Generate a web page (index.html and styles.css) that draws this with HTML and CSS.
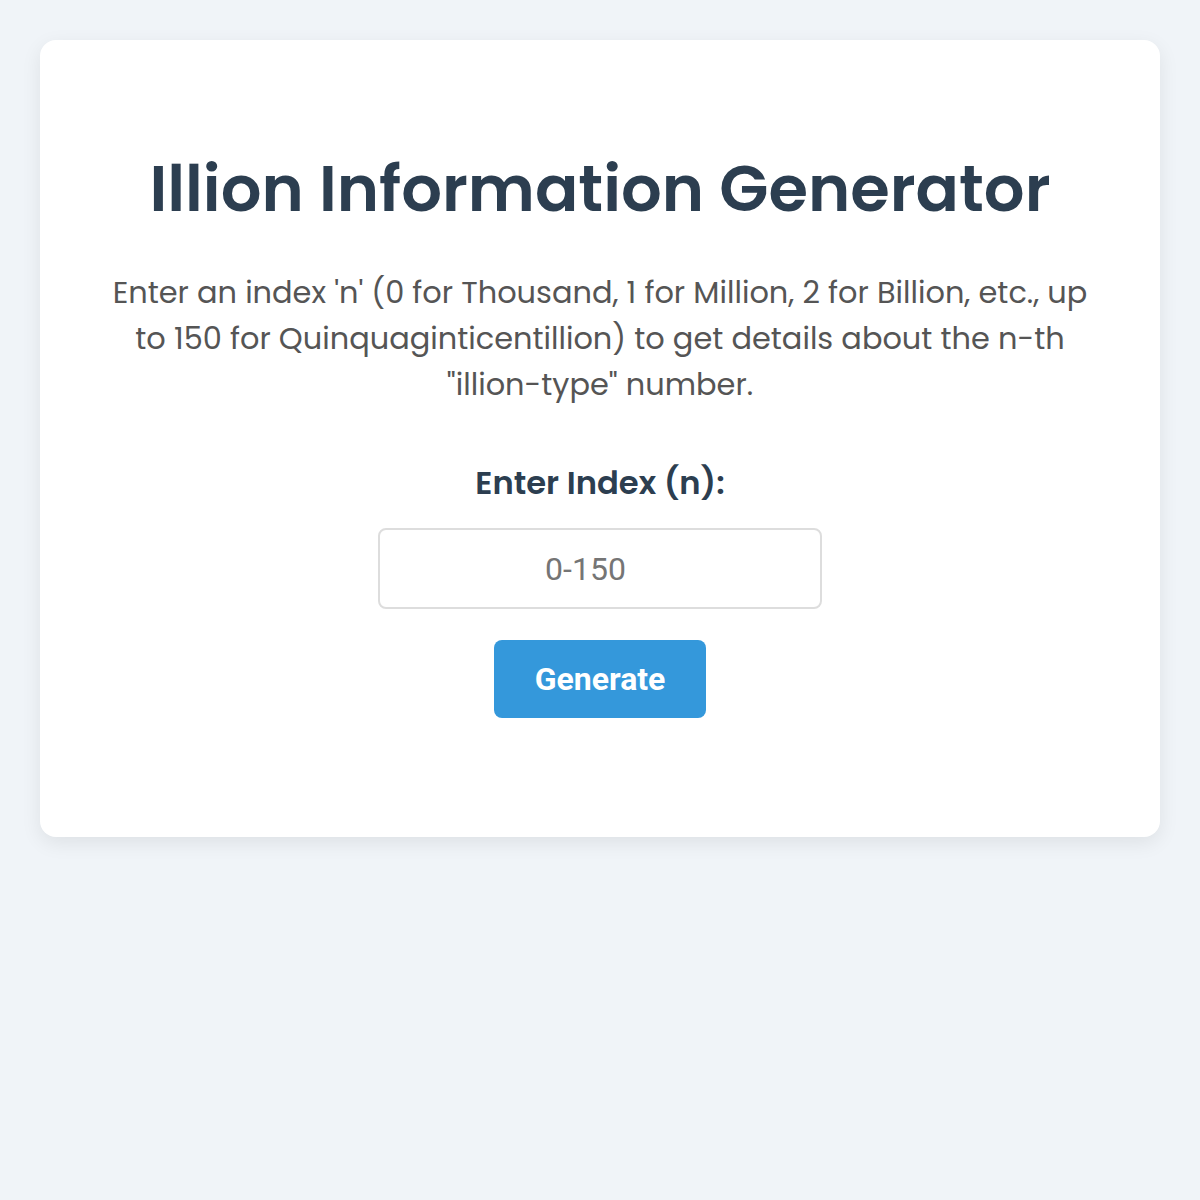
FILE: index.html
```html
<!DOCTYPE html>
<html lang="en">
<head>
    <meta charset="UTF-8">
    <meta name="viewport" content="width=device-width, initial-scale=1.0">
    <title>Illion Information Generator</title>
    <link rel="stylesheet" href="styles.css">
</head>
<body>
    <div class="container">
        <h1>Illion Information Generator</h1>
        <p class="intro">Enter an index 'n' (0 for Thousand, 1 for Million, 2 for Billion, etc., up to 150 for Quinquaginticentillion) to get details about the n-th "illion-type" number.</p>
        <div class="input-group">
            <label for="index-input">Enter Index (n):</label>
            <input type="number" id="index-input" placeholder="0-150" min="0" max="150">
            <button id="generate-button">Generate</button>
        </div>
        <div class="result" id="result"></div>
    </div>
</body>
</html>
```

FILE: styles.css
```css
* {
    margin: 0;
    padding: 0;
    box-sizing: border-box;
}

body {
    font-family: 'Poppins', 'Inter', sans-serif;
    background-color: #f0f4f8;
    color: #333;
    padding: 40px;
}

.container {
    max-width: 1120px;
    margin: 0 auto;
    background-color: white;
    border-radius: 16px;
    box-shadow: 0 6px 20px rgba(0, 0, 0, 0.08);
    padding: 106px 72px 119px;
    text-align: center;
}

h1 {
    font-size: 64px;
    font-weight: 600;
    line-height: 86px;
    color: #2c3e50;
    margin-bottom: 38px;
}

.intro {
    font-size: 30.4px;
    line-height: 46px;
    color: #555;
    margin-bottom: 55px;
}

.input-group {
    display: flex;
    flex-direction: column;
    align-items: center;
}

label {
    font-size: 32.2px;
    font-weight: 600;
    line-height: 40px;
    color: #2c3e50;
    margin-bottom: 25px;
}

#index-input {
    width: 444px;
    height: 81px;
    padding: 0 34px 0 20px;
    border: 2px solid #ddd;
    border-radius: 8px;
    font-family: 'Roboto', sans-serif;
    font-size: 32px;
    text-align: center;
    margin-bottom: 31px;
}

#index-input::placeholder {
    color: #757575;
}

#generate-button {
    width: 212px;
    height: 78px;
    background-color: #3498db;
    color: white;
    border: none;
    border-radius: 8px;
    font-family: 'Roboto', sans-serif;
    font-size: 32px;
    font-weight: 700;
    cursor: pointer;
}

.result:empty {
    display: none;
}
```
